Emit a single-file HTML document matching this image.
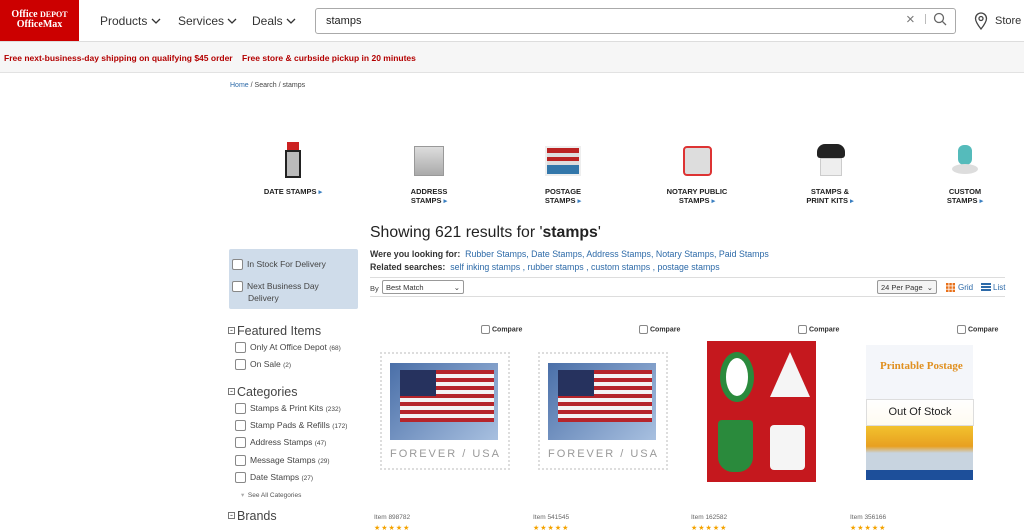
<!DOCTYPE html>
<html><head><meta charset="utf-8"><style>
*{margin:0;padding:0;box-sizing:border-box}
body{width:1024px;height:529px;overflow:hidden;background:#fff;font-family:"Liberation Sans",sans-serif;position:relative;color:#333}
.a{position:absolute}
.nav{font-size:12px;color:#333;top:14px}
.lbl{font-size:7.5px;font-weight:bold;color:#222;text-align:center;width:100px;line-height:9px}
.lbl i{color:#3a7fc1;font-style:normal;font-size:7px}
.cb{width:11px;height:11px;border:1px solid #888;border-radius:2px;background:#fff;display:inline-block;vertical-align:middle}
.sb{font-size:8.5px;color:#444;left:235px}
.sb .cb{margin-right:4px}
.sb small{font-size:6.5px}
.hd{font-size:12.5px;color:#444;left:228px}
.hd b{font-weight:normal;font-size:9px;border:1px solid #777;display:inline-block;width:7px;height:7px;line-height:5px;text-align:center;margin-right:2px;vertical-align:2px}
.cmp{font-size:7px;color:#333;font-weight:bold}
.cmp .cb{width:9px;height:9px;margin-right:2px}
.item{font-size:6.5px;color:#666;top:514px}
.stars{color:#f4a300;font-size:7px;top:524px;letter-spacing:1px}
a{color:#2d6aa8;text-decoration:none}
</style></head><body>
<div class="a" style="left:0;top:0;width:79px;height:41px;background:#c00;color:#fff;font-family:'Liberation Serif',serif;font-weight:bold;font-size:10px;line-height:10px;padding-top:10px;text-align:center">Office <span style="font-size:8px">DEPOT</span><br>OfficeMax</div>
<div class="a nav" style="left:100px">Products <svg width="10" height="7"><path d="M1 1l4 4 4-4" fill="none" stroke="#333" stroke-width="1.3"/></svg></div>
<div class="a nav" style="left:178px">Services <svg width="10" height="7"><path d="M1 1l4 4 4-4" fill="none" stroke="#333" stroke-width="1.3"/></svg></div>
<div class="a nav" style="left:252px">Deals <svg width="10" height="7"><path d="M1 1l4 4 4-4" fill="none" stroke="#333" stroke-width="1.3"/></svg></div>
<div class="a" style="left:315px;top:8px;width:641px;height:26px;border:1px solid #aaa;border-radius:3px;font-size:11px;padding:6px 10px;color:#222">stamps</div>
<div class="a" style="left:906px;top:11px;font-size:15px;color:#777">×</div>
<div class="a" style="left:925px;top:14px;width:1px;height:10px;background:#bbb"></div>
<svg class="a" style="left:933px;top:12px" width="14" height="14"><circle cx="6" cy="6" r="4.5" fill="none" stroke="#666" stroke-width="1.3"/><line x1="9.3" y1="9.3" x2="13" y2="13" stroke="#666" stroke-width="1.3"/></svg>
<svg class="a" style="left:974px;top:12px" width="14" height="18"><path d="M7 17C3 12 1.5 9 1.5 6.5a5.5 5.5 0 0 1 11 0C12.5 9 11 12 7 17z" fill="none" stroke="#444" stroke-width="1.3"/><circle cx="7" cy="6.5" r="2" fill="none" stroke="#444" stroke-width="1.3"/></svg>
<div class="a" style="left:995px;top:15px;font-size:11px;color:#333">Store</div>
<div class="a" style="left:0;top:41px;width:1024px;height:32px;background:#f6f6f6;border-top:1px solid #ddd;border-bottom:1px solid #e2e2e2"></div>
<div class="a" style="left:4px;top:53px;font-size:8.5px;font-weight:bold;color:#b30000">Free next-business-day shipping on qualifying $45 order &nbsp;&nbsp; Free store &amp; curbside pickup in 20 minutes</div>
<div class="a" style="left:230px;top:82px;font-size:7px;color:#444"><a>Home</a> / Search / stamps</div>
<div class="a" style="left:287px;top:142px;width:12px;height:8px;background:#c22"></div>
<div class="a" style="left:285px;top:150px;width:16px;height:28px;border:2px solid #222;background:#bbb"></div>
<div class="a" style="left:414px;top:146px;width:30px;height:30px;background:linear-gradient(#ddd,#aaa);border:1px solid #999"></div>
<div class="a" style="left:545px;top:146px;width:36px;height:30px;background:linear-gradient(#b22 0 20%,#ddd 20% 35%,#b22 35% 50%,#ddd 50% 65%,#37a 65%);border:2px solid #eee"></div>
<div class="a" style="left:683px;top:146px;width:29px;height:30px;border:2px solid #d33;border-radius:4px;background:#ddd"></div>
<div class="a" style="left:817px;top:144px;width:28px;height:14px;background:#222;border-radius:8px 8px 3px 3px"></div>
<div class="a" style="left:820px;top:158px;width:22px;height:18px;background:#eee;border:1px solid #ccc"></div>
<div class="a" style="left:958px;top:145px;width:14px;height:20px;background:#5bb;border-radius:6px"></div>
<div class="a" style="left:952px;top:164px;width:26px;height:10px;background:#ddd;border-radius:50%"></div>
<div class="a lbl" style="left:243px;top:187px">DATE STAMPS <i>▸</i></div>
<div class="a lbl" style="left:379px;top:187px">ADDRESS<br>STAMPS <i>▸</i></div>
<div class="a lbl" style="left:513px;top:187px">POSTAGE<br>STAMPS <i>▸</i></div>
<div class="a lbl" style="left:647px;top:187px">NOTARY PUBLIC<br>STAMPS <i>▸</i></div>
<div class="a lbl" style="left:780px;top:187px">STAMPS &amp;<br>PRINT KITS <i>▸</i></div>
<div class="a lbl" style="left:915px;top:187px">CUSTOM<br>STAMPS <i>▸</i></div>
<div class="a" style="left:370px;top:224px;font-size:15.8px;color:#222">Showing 621 results for '<b>stamps</b>'</div>
<div class="a" style="left:370px;top:249px;font-size:8.8px;color:#333"><b>Were you looking for:</b> &nbsp;<a>Rubber Stamps, Date Stamps, Address Stamps, Notary Stamps, Paid Stamps</a></div>
<div class="a" style="left:370px;top:262px;font-size:8.8px;color:#333"><b>Related searches:</b> &nbsp;<a>self inking stamps , rubber stamps , custom stamps , postage stamps</a></div>
<div class="a" style="left:370px;top:277px;width:635px;height:20px;border-top:1px solid #ddd;border-bottom:1px solid #ddd"></div>
<div class="a" style="left:370px;top:284px;font-size:7.5px;color:#444">By</div>
<div class="a" style="left:382px;top:280px;width:82px;height:14px;border:1px solid #999;border-radius:2px;font-size:7.5px;padding:2px 3px;color:#333">Best Match<span style="float:right">&#8964;</span></div>
<div class="a" style="left:877px;top:280px;width:60px;height:14px;border:1px solid #999;border-radius:2px;font-size:7.5px;padding:2px 3px;color:#333;background:#f4f4f4">24 Per Page<span style="float:right">&#8964;</span></div>
<svg class="a" style="left:946px;top:283px" width="9" height="9"><g fill="#e8701a"><rect x="0" y="0" width="2.5" height="2.5"/><rect x="3.3" y="0" width="2.5" height="2.5"/><rect x="6.6" y="0" width="2.5" height="2.5"/><rect x="0" y="3.3" width="2.5" height="2.5"/><rect x="3.3" y="3.3" width="2.5" height="2.5"/><rect x="6.6" y="3.3" width="2.5" height="2.5"/><rect x="0" y="6.6" width="2.5" height="2.5"/><rect x="3.3" y="6.6" width="2.5" height="2.5"/><rect x="6.6" y="6.6" width="2.5" height="2.5"/></g></svg>
<div class="a" style="left:958px;top:283px;font-size:8px;color:#2d6aa8">Grid</div>
<div class="a" style="left:981px;top:283px;width:10px;height:8px;background:repeating-linear-gradient(#2d6aa8 0 2px,#fff 2px 3px)"></div>
<div class="a" style="left:993px;top:283px;font-size:8px;color:#2d6aa8">List</div>
<div class="a" style="left:229px;top:249px;width:129px;height:60px;background:#cfdcea;border-radius:2px"></div>
<div class="a sb" style="left:232px;top:259px"><span class="cb"></span>In Stock For Delivery</div>
<div class="a sb" style="left:232px;top:280px;line-height:12px"><span class="cb"></span>Next Business Day<br><span style="padding-left:16px">Delivery</span></div>
<div class="a hd" style="top:324px"><b>-</b>Featured Items</div>
<div class="a sb" style="top:342px"><span class="cb"></span>Only At Office Depot <small>(68)</small></div>
<div class="a sb" style="top:359px"><span class="cb"></span>On Sale <small>(2)</small></div>
<div class="a hd" style="top:385px"><b>-</b>Categories</div>
<div class="a sb" style="top:403px"><span class="cb"></span>Stamps &amp; Print Kits <small>(232)</small></div>
<div class="a sb" style="top:420px"><span class="cb"></span>Stamp Pads &amp; Refills <small>(172)</small></div>
<div class="a sb" style="top:437px"><span class="cb"></span>Address Stamps <small>(47)</small></div>
<div class="a sb" style="top:455px"><span class="cb"></span>Message Stamps <small>(29)</small></div>
<div class="a sb" style="top:472px"><span class="cb"></span>Date Stamps <small>(27)</small></div>
<div class="a" style="left:241px;top:491px;font-size:6.5px;color:#555"><span style="color:#aaa">▾</span> &nbsp;See All Categories</div>
<div class="a hd" style="top:509px"><b>-</b>Brands</div>
<div class="a cmp" style="left:481px;top:325px"><span class="cb"></span>Compare</div>
<div class="a cmp" style="left:639px;top:325px"><span class="cb"></span>Compare</div>
<div class="a cmp" style="left:798px;top:325px"><span class="cb"></span>Compare</div>
<div class="a cmp" style="left:957px;top:325px"><span class="cb"></span>Compare</div>
<div class="a" style="left:380px;top:352px;width:130px;height:118px;border:2px dotted #ddd;background:#fff"></div>
<div class="a" style="left:390px;top:363px;width:108px;height:77px;background:linear-gradient(135deg,#4a6fa8,#a8c0e0)"></div>
<div class="a" style="left:400px;top:370px;width:94px;height:52px;background:repeating-linear-gradient(#b5252b 0 4px,#f3f3f3 4px 8px)"></div>
<div class="a" style="left:400px;top:370px;width:36px;height:26px;background:#26325e"></div>
<div class="a" style="left:390px;top:448px;font-size:11px;color:#999;letter-spacing:2px">FOREVER / USA</div>
<div class="a" style="left:538px;top:352px;width:130px;height:118px;border:2px dotted #ddd;background:#fff"></div>
<div class="a" style="left:548px;top:363px;width:108px;height:77px;background:linear-gradient(135deg,#4a6fa8,#a8c0e0)"></div>
<div class="a" style="left:558px;top:370px;width:94px;height:52px;background:repeating-linear-gradient(#b5252b 0 4px,#f3f3f3 4px 8px)"></div>
<div class="a" style="left:558px;top:370px;width:36px;height:26px;background:#26325e"></div>
<div class="a" style="left:548px;top:448px;font-size:11px;color:#999;letter-spacing:2px">FOREVER / USA</div>
<div class="a" style="left:707px;top:341px;width:109px;height:141px;background:#c5181e"></div>
<div class="a" style="left:720px;top:352px;width:34px;height:50px;background:#fff;border-radius:50%;border:6px solid #2a8a3c"></div>
<div class="a" style="left:770px;top:352px;width:0;height:0;border-left:20px solid transparent;border-right:20px solid transparent;border-bottom:45px solid #f5f5f5"></div>
<div class="a" style="left:718px;top:420px;width:35px;height:52px;background:#2a8a3c;border-radius:4px 4px 15px 15px"></div>
<div class="a" style="left:770px;top:425px;width:35px;height:45px;background:#f5f5f5;border-radius:4px"></div>
<div class="a" style="left:866px;top:345px;width:107px;height:135px;background:linear-gradient(#f4f6fa 0,#f4f6fa 40%,#f2c22e 60%,#e8a020 75%,#c8d4e0 80%)"></div>
<div class="a" style="left:880px;top:360px;font-family:'Liberation Serif',serif;font-weight:bold;font-size:11px;color:#e09020">Printable Postage</div>
<div class="a" style="left:866px;top:399px;width:108px;height:27px;background:rgba(255,255,255,.93);border:1px solid #ddd;font-size:11px;color:#222;text-align:center;line-height:25px">Out Of Stock</div>
<div class="a" style="left:866px;top:470px;width:107px;height:10px;background:#1d4f9a"></div>
<div class="a item" style="left:374px">Item 898782</div>
<div class="a item" style="left:533px">Item 541545</div>
<div class="a item" style="left:691px">Item 162582</div>
<div class="a item" style="left:850px">Item 356166</div>
<div class="a stars" style="left:374px">★★★★★</div>
<div class="a stars" style="left:533px">★★★★★</div>
<div class="a stars" style="left:691px">★★★★★</div>
<div class="a stars" style="left:850px">★★★★★</div>
</body></html>
